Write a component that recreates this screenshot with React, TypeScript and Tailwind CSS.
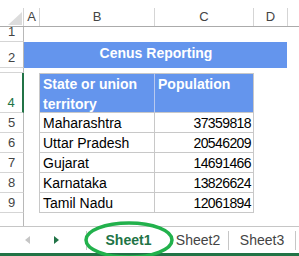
const rows = [
  { n: 5, name: "Maharashtra", pop: "37359818" },
  { n: 6, name: "Uttar Pradesh", pop: "20546209" },
  { n: 7, name: "Gujarat", pop: "14691466" },
  { n: 8, name: "Karnataka", pop: "13826624" },
  { n: 9, name: "Tamil Nadu", pop: "12061894" },
];

function RowHead({ n, h, selected }: { n?: number; h: string; selected?: boolean }) {
  return (
    <div
      className={`w-[24px] shrink-0 flex items-end justify-center border-b border-b-[#d5d5d5] text-[13px] ${h} ${
        selected ? "border-r-2 border-r-[#217346] text-[#217346]" : "border-r border-r-[#b8b8b8] text-[#444]"
      }`}
    >
      <span className="leading-[16px] pb-[1px]">{n}</span>
    </div>
  );
}

export default function App() {
  return (
    <div className="relative w-[299px] h-[256px] overflow-hidden bg-white text-[14px] font-['Liberation_Sans',Arial,sans-serif] text-black">
      <div className="h-[8px]"></div>

      {/* column headers */}
      <div className="flex h-[19px] border-b border-[#ababab] text-[13px] text-[#444]">
        <div className="w-[24px] shrink-0 border-r border-[#d5d5d5] flex items-end justify-end pr-[1px] pb-[1px]">
          <svg width="14" height="13" viewBox="0 0 14 13">
            <polygon points="0,13 14,13 14,0" fill="#dcdcdc" />
          </svg>
        </div>
        <div className="w-[16px] shrink-0 border-r border-[#d5d5d5] flex items-center justify-center">A</div>
        <div className="w-[115px] shrink-0 border-r border-[#d5d5d5] flex items-center justify-center">B</div>
        <div className="w-[99px] shrink-0 border-r border-[#d5d5d5] flex items-center justify-center">C</div>
        <div className="w-[34px] shrink-0 border-r border-[#d5d5d5] flex items-center justify-center">D</div>
        <div className="flex-1"></div>
      </div>

      {/* row 1 */}
      <div className="flex">
        <RowHead n={1} h="h-[15px]" />
      </div>

      {/* row 2 */}
      <div className="flex">
        <RowHead n={2} h="h-[26px]" />
        <div className="w-[263px] h-[26px] bg-[#6495ed] flex items-center justify-center pb-[3px] pl-[1px] text-white font-bold">
          Cenus Reporting
        </div>
      </div>

      {/* row 3 */}
      <div className="flex">
        <RowHead h="h-[5px]" />
      </div>

      {/* row 4 */}
      <div className="flex">
        <RowHead n={4} h="h-[40px]" selected />
        <div className="w-[15px] shrink-0"></div>
        <div className="w-[116px] h-[40px] shrink-0 bg-[#6495ed] border border-[#c8c8c8] border-r-[#b8c9ef] px-[3px] text-white font-bold leading-[20px]">
          State or union
          <br />
          territory
        </div>
        <div className="w-[99px] h-[40px] shrink-0 bg-[#6495ed] border-y border-r border-[#c8c8c8] px-[3px] text-white font-bold leading-[20px]">
          Population
        </div>
      </div>

      {/* data rows */}
      {rows.map((r) => (
        <div key={r.n} className="flex">
          <RowHead n={r.n} h="h-[20px]" />
          <div className="w-[15px] shrink-0"></div>
          <div className="w-[116px] h-[20px] shrink-0 border-l border-r border-b border-[#c8c8c8] flex items-center px-[3px] pt-[1px]">
            {r.name}
          </div>
          <div className="w-[99px] h-[20px] shrink-0 border-r border-b border-[#c8c8c8] flex items-center justify-end px-[2px] pt-[1px] tracking-[-0.6px]">
            {r.pop}
          </div>
        </div>
      ))}

      {/* filler */}
      <div className="flex h-[13px]">
        <div className="w-[24px] border-r border-[#b8b8b8]"></div>
      </div>

      {/* sheet tabs */}
      <div className="h-[30px] border-t border-[#c6c6c6] flex flex-col">
        <div className="flex-1 flex items-center text-[#444]">
          <div className="w-[86px] shrink-0 flex items-center pl-[25px] gap-[24px]">
            <svg width="5" height="8" viewBox="0 0 5 8">
              <polygon points="5,0 5,8 0,4" fill="#c6c6c6" />
            </svg>
            <svg width="5" height="8" viewBox="0 0 5 8">
              <polygon points="0,0 0,8 5,4" fill="#217346" />
            </svg>
          </div>
          <div className="w-[82px] h-[19px] shrink-0 border-l border-[#c6c6c6] flex items-center justify-center font-bold text-[#217346] pl-[2px]">
            Sheet1
          </div>
          <div className="w-[60px] h-[19px] shrink-0 flex items-center justify-center">Sheet2</div>
          <div className="w-[67px] h-[19px] shrink-0 border-l border-[#c6c6c6] flex items-center justify-center">Sheet3</div>
          <div className="h-[19px] border-l border-[#c6c6c6]"></div>
        </div>
        <div className="h-[3px] bg-[#217346]"></div>
      </div>

      {/* annotation ellipse around the active tab */}
      <svg className="absolute left-[83px] top-[220px]" width="94" height="42" viewBox="0 0 94 42">
        <ellipse cx="46" cy="20" rx="43" ry="17" fill="none" stroke="#22b14c" strokeWidth="3.5" />
      </svg>
    </div>
  );
}
